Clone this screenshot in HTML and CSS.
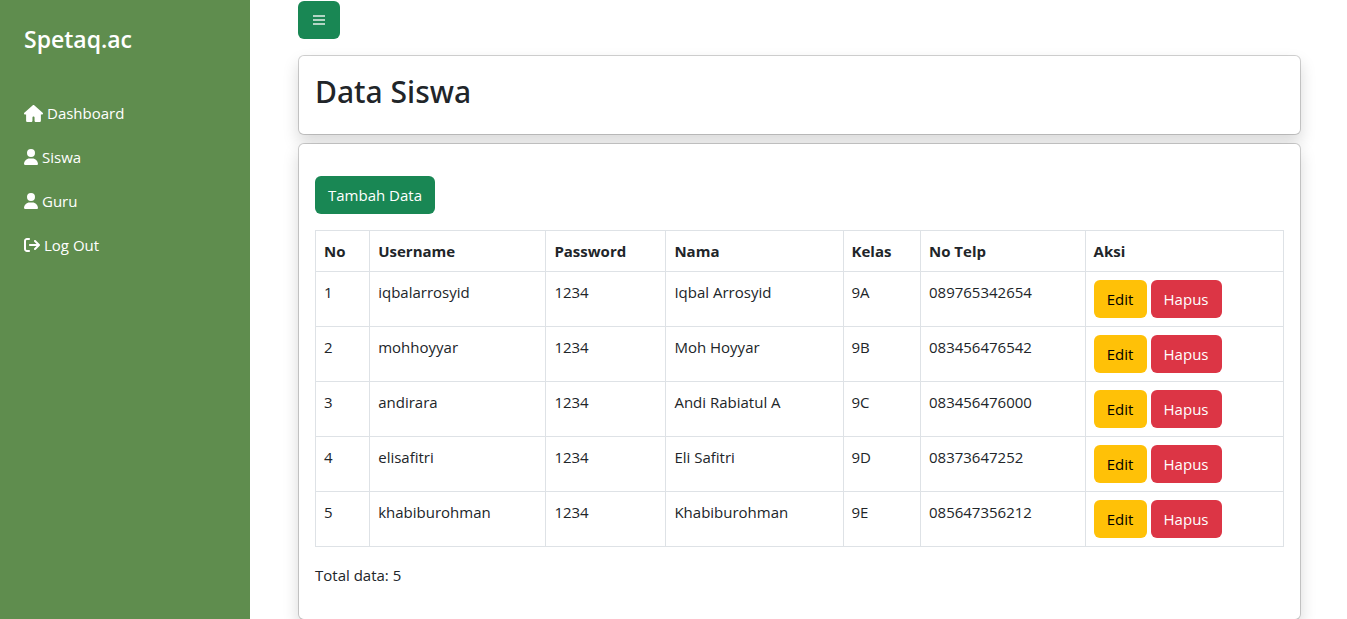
FILE: index.html
```html
<!DOCTYPE html>
<html lang="id">
<head>
<meta charset="utf-8">
<meta name="viewport" content="width=device-width, initial-scale=1">
<title>Data Siswa</title>
<link rel="stylesheet" href="styles.css">
</head>
<body>
<div class="wrapper">
  <aside class="sidebar">
    <h2 class="brand">Spetaq.ac</h2>
    <nav class="menu">
      <a class="menu-link" href="#"><svg class="icon" width="19" height="17" viewBox="0 0 576 512" aria-hidden="true"><path d="M575.800 255.500c0 18-15 32.100-32 32.100h-32l.7 160.200c0 2.700-.2 5.400-.5 8.100V472c0 22.100-17.900 40-40 40H360c-22.100 0-40-17.900-40-40V376c0-17.700-14.300-32-32-32s-32 14.300-32 32v96c0 22.100-17.900 40-40 40H104c-22.100 0-40-17.900-40-40V287.600H32c-18 0-32-14-32-32.100 0-9 3-17 10-24L266.400 8c7-7 15-8 22-8s15 2 21 7l255.400 224.500c8 7 12 15 11 24z"/></svg><span>Dashboard</span></a>
      <a class="menu-link" href="#"><svg class="icon" width="14" height="16" viewBox="0 0 448 512" aria-hidden="true"><path d="M224 256a128 128 0 1 0 0-256 128 128 0 1 0 0 256zm-45.700 48C79.800 304 0 383.800 0 482.300 0 498.700 13.300 512 29.700 512h388.600c16.400 0 29.700-13.300 29.700-29.700C448 383.800 368.200 304 269.700 304h-91.400z"/></svg><span>Siswa</span></a>
      <a class="menu-link" href="#"><svg class="icon" width="14" height="16" viewBox="0 0 448 512" aria-hidden="true"><path d="M224 256a128 128 0 1 0 0-256 128 128 0 1 0 0 256zm-45.700 48C79.800 304 0 383.800 0 482.300 0 498.700 13.300 512 29.700 512h388.600c16.400 0 29.700-13.300 29.700-29.700C448 383.800 368.200 304 269.700 304h-91.400z"/></svg><span>Guru</span></a>
      <a class="menu-link" href="#"><svg class="icon" width="16" height="16" viewBox="0 0 512 512" aria-hidden="true"><path d="M502.600 278.600c12.500-12.500 12.500-32.800 0-45.300l-128-128c-12.500-12.500-32.800-12.500-45.300 0s-12.500 32.800 0 45.300L402.700 224H192c-17.700 0-32 14.300-32 32s14.300 32 32 32h210.700l-73.400 73.400c-12.500 12.500-12.500 32.800 0 45.300s32.800 12.500 45.300 0l128-128zM160 96c17.700 0 32-14.300 32-32s-14.300-32-32-32H96C43 32 0 75 0 128v256c0 53 43 96 96 96h64c17.700 0 32-14.300 32-32s-14.300-32-32-32H96c-17.700 0-32-14.300-32-32V128c0-17.700 14.300-32 32-32h64z"/></svg><span>Log Out</span></a>
    </nav>
  </aside>
  <main class="content">
    <button class="btn btn-success btn-toggle" type="button" aria-label="Menu"><svg class="bars" width="16" height="24" viewBox="0 0 16 24" aria-hidden="true"><path d="M2 8h12M2 12h12M2 16h12"/></svg></button>
    <section class="card">
      <h1 class="title">Data Siswa</h1>
    </section>
    <section class="card card-data">
      <button class="btn btn-success btn-add" type="button">Tambah Data</button>
      <table class="table">
        <colgroup><col class="c-no"><col class="c-user"><col class="c-pass"><col class="c-name"><col class="c-class"><col class="c-phone"><col></colgroup>
        <thead>
          <tr><th>No</th><th>Username</th><th>Password</th><th>Nama</th><th>Kelas</th><th>No Telp</th><th>Aksi</th></tr>
        </thead>
        <tbody>
          <tr><td>1</td><td>iqbalarrosyid</td><td>1234</td><td>Iqbal Arrosyid</td><td>9A</td><td>089765342654</td><td><div class="actions"><button class="btn btn-warning" type="button">Edit</button><button class="btn btn-danger" type="button">Hapus</button></div></td></tr>
          <tr><td>2</td><td>mohhoyyar</td><td>1234</td><td>Moh Hoyyar</td><td>9B</td><td>083456476542</td><td><div class="actions"><button class="btn btn-warning" type="button">Edit</button><button class="btn btn-danger" type="button">Hapus</button></div></td></tr>
          <tr><td>3</td><td>andirara</td><td>1234</td><td>Andi Rabiatul A</td><td>9C</td><td>083456476000</td><td><div class="actions"><button class="btn btn-warning" type="button">Edit</button><button class="btn btn-danger" type="button">Hapus</button></div></td></tr>
          <tr><td>4</td><td>elisafitri</td><td>1234</td><td>Eli Safitri</td><td>9D</td><td>08373647252</td><td><div class="actions"><button class="btn btn-warning" type="button">Edit</button><button class="btn btn-danger" type="button">Hapus</button></div></td></tr>
          <tr><td>5</td><td>khabiburohman</td><td>1234</td><td>Khabiburohman</td><td>9E</td><td>085647356212</td><td><div class="actions"><button class="btn btn-warning" type="button">Edit</button><button class="btn btn-danger" type="button">Hapus</button></div></td></tr>
        </tbody>
      </table>
      <p class="total">Total data: 5</p>
    </section>
  </main>
</div>
</body>
</html>
```
FILE: styles.css
```css
* { box-sizing: border-box; }

body {
  margin: 0;
  background: #fff;
  color: #212529;
  font-family: "Segoe UI", "Open Sans", "Noto Sans", sans-serif;
  font-size: 15px;
  line-height: 24px;
}

.wrapper {
  display: flex;
  height: 100vh;
}

.sidebar {
  flex: 0 0 250px;
  padding: 24px;
  background: #5f8d4e;
  color: #fff;
}

.brand {
  margin: 0 0 46px;
  font-size: 23px;
  font-weight: 600;
  line-height: 30px;
}

.menu {
  display: flex;
  flex-direction: column;
  gap: 18px;
}

.menu-link {
  display: flex;
  align-items: center;
  gap: 4px;
  height: 26px;
  color: #fff;
  text-decoration: none;
}

.icon { fill: currentColor; }

.content {
  flex: 1;
  min-width: 0;
  padding: 1px 46px 0 48px;
  overflow-y: auto;
  scrollbar-width: none;
}

.btn {
  display: inline-block;
  padding: 6px 12px;
  border: 1px solid transparent;
  border-radius: 6px;
  font: inherit;
  white-space: nowrap;
  cursor: pointer;
}

.btn-success { background: #198754; color: #fff; }
.btn-warning { background: #ffc107; color: #000; min-width: 53px; }
.btn-danger { background: #dc3545; color: #fff; min-width: 71px; }

.btn-toggle {
  display: block;
  margin-bottom: 16px;
}

.btn-add {
  display: block;
  margin: 16px 0;
}

.bars {
  display: block;
  stroke: #b2d5c4;
  stroke-width: 2;
}

.card {
  margin-bottom: 8px;
  padding: 16px;
  border: 1px solid rgba(0, 0, 0, 0.176);
  border-radius: 6px;
  background: #fff;
  background-clip: padding-box;
  box-shadow: 0 8px 16px rgba(0, 0, 0, 0.15);
}

.title {
  margin: 0 0 6px;
  font-family: "Segoe UI", "Noto Sans", "Open Sans", sans-serif;
  font-size: 30px;
  font-weight: 500;
  line-height: 40px;
}

.table {
  width: 100%;
  margin-bottom: 16px;
  border-collapse: collapse;
  table-layout: fixed;
}

.table th,
.table td {
  padding: 8px;
  border: 1px solid #dee2e6;
  text-align: left;
  vertical-align: top;
}

.table th { font-weight: 700; }

.c-no { width: 5.6%; }
.c-user { width: 18.2%; }
.c-pass { width: 12.4%; }
.c-name { width: 18.3%; }
.c-class { width: 8%; }
.c-phone { width: 17%; }

.actions {
  display: flex;
  gap: 4px;
}

.total { margin: 0 0 16px; }
```
